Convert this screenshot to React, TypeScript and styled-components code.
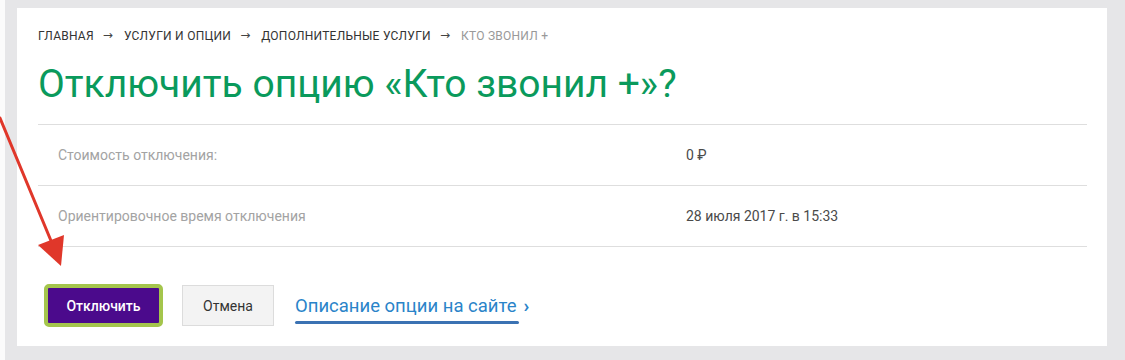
import React from "react";
import styled, { createGlobalStyle } from "styled-components";

const Global = createGlobalStyle`
  html, body { margin: 0; padding: 0; }
  body {
    background: #e6e6e8;
    font-family: Roboto, "Noto Sans", "Liberation Sans", sans-serif;
    width: 1125px;
    height: 360px;
    overflow: hidden;
  }
`;

const Page = styled.div`
  position: relative;
  box-sizing: border-box;
  width: 1125px;
  height: 360px;
  padding: 8px 18px 14px 12px;
  border-left: 5px solid #fbfbfb;
`;

const Card = styled.main`
  box-sizing: border-box;
  height: 338px;
  background: #fff;
  padding: 20px 20px 0 21px;
  display: flex;
  flex-direction: column;
`;

const Crumbs = styled.nav`
  display: flex;
  align-items: center;
  font-size: 12px;
  line-height: 16px;
  text-transform: uppercase;
  color: #333;
  letter-spacing: 0.25px;
`;

const Crumb = styled.span<{ $current?: boolean }>`
  color: ${(p) => (p.$current ? "#999" : "#333")};
`;

const Sep = styled.span`
  margin: 0 11px 0 9px;
  color: #444;
  font-family: "DejaVu Sans", sans-serif;
  font-size: 12px;
  line-height: 16px;
  letter-spacing: 0;
  position: relative;
  top: -1px;
`;

const Title = styled.h1`
  margin: 17px 0 0;
  font-weight: 400;
  font-size: 39px;
  line-height: 46px;
  color: #0a9a5c;
`;

const Table = styled.div`
  margin-top: 17px;
  border-top: 1px solid #dedede;
`;

const Row = styled.div`
  display: grid;
  grid-template-columns: 648px 1fr;
  height: 60px;
  align-items: center;
  border-bottom: 1px solid #dedede;
  font-size: 14px;
`;

const Label = styled.div`
  padding-left: 20px;
  color: #a3a3a3;
`;

const Value = styled.div`
  color: #4a4a4a;
`;

const Actions = styled.div`
  display: flex;
  align-items: center;
  margin-top: 37px;
  padding-left: 6px;
`;

const PrimaryButton = styled.button`
  box-sizing: border-box;
  width: 119px;
  height: 43px;
  background: #4b0a8c;
  border: 4px solid #a4c54c;
  border-radius: 5px;
  color: #fff;
  font-family: inherit;
  font-size: 14px;
  font-weight: 500;
  cursor: pointer;
`;

const SecondaryButton = styled.button`
  box-sizing: border-box;
  width: 92px;
  height: 41px;
  margin-left: 19px;
  background: #f3f3f3;
  border: 1px solid #dcdcdc;
  color: #333;
  font-family: inherit;
  font-size: 14px;
  cursor: pointer;
`;

const InfoLink = styled.a`
  position: relative;
  margin-left: 21px;
  font-size: 18.5px;
  line-height: 22px;
  color: #2a84c9;
  text-decoration: none;
  display: inline-flex;
  align-items: center;
  gap: 7px;
  &::after {
    content: "";
    position: absolute;
    left: 0;
    right: 10px;
    bottom: -7px;
    height: 3px;
    border-radius: 2px;
    background: #3b72b3;
  }
`;

const Chevron = styled.span`
  font-weight: 700;
  font-size: 19px;
  color: #2a84c9;
`;

const ArrowOverlay = styled.svg`
  position: absolute;
  left: -5px;
  top: 0;
  pointer-events: none;
`;

export default function App() {
  return (
    <>
      <Global />
      <Page>
        <Card>
          <Crumbs>
            <Crumb>Главная</Crumb>
            <Sep>→</Sep>
            <Crumb>Услуги и опции</Crumb>
            <Sep>→</Sep>
            <Crumb>Дополнительные услуги</Crumb>
            <Sep>→</Sep>
            <Crumb $current>Кто звонил +</Crumb>
          </Crumbs>
          <Title>Отключить опцию «Кто звонил +»?</Title>
          <Table>
            <Row>
              <Label>Стоимость отключения:</Label>
              <Value>0 ₽</Value>
            </Row>
            <Row>
              <Label>Ориентировочное время отключения</Label>
              <Value>28 июля 2017 г. в 15:33</Value>
            </Row>
          </Table>
          <Actions>
            <PrimaryButton>Отключить</PrimaryButton>
            <SecondaryButton>Отмена</SecondaryButton>
            <InfoLink href="#">
              Описание опции на сайте <Chevron>›</Chevron>
            </InfoLink>
          </Actions>
        </Card>
        <ArrowOverlay width="80" height="280" viewBox="0 0 80 280">
          <line x1="0" y1="118" x2="54" y2="248" stroke="#e0372a" strokeWidth="3" strokeLinecap="round" />
          <polygon points="38,245 64,235 61,266" fill="#e0372a" />
        </ArrowOverlay>
      </Page>
    </>
  );
}
